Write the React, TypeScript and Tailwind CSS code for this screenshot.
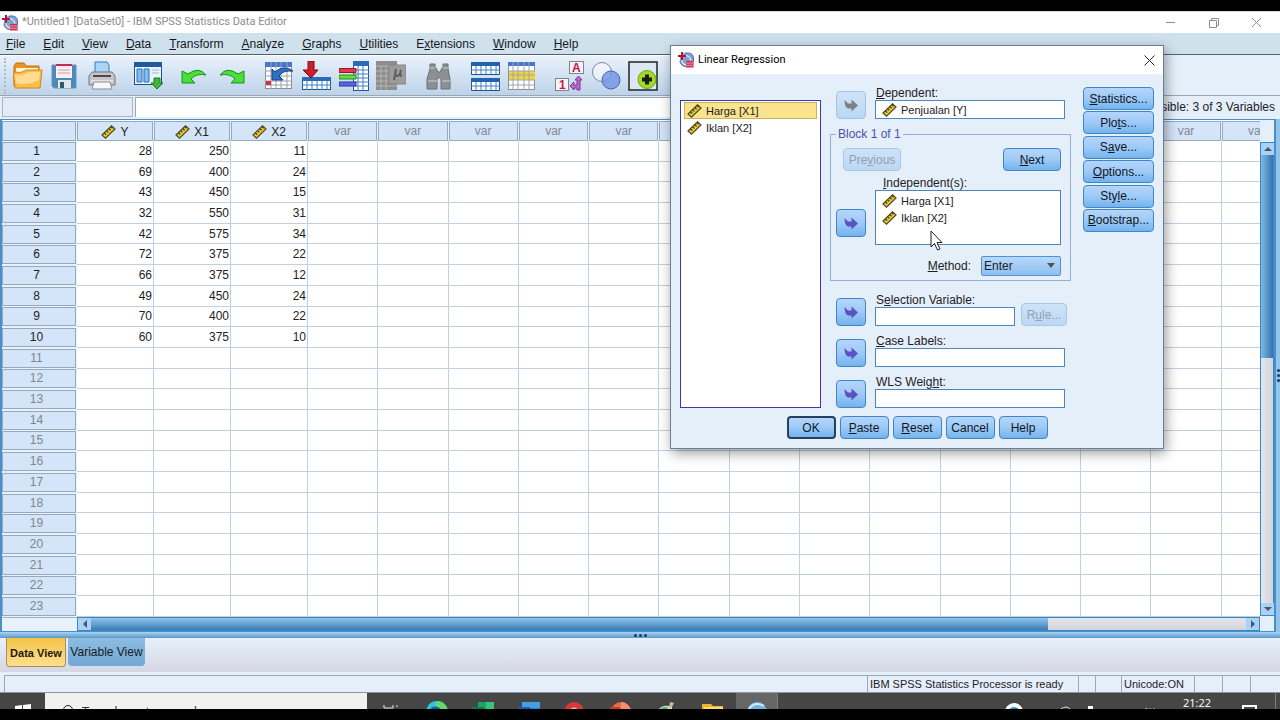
import React from 'react';

type Variable = { name: string; label?: string };

const variables: Variable[] = [
  { name: 'Y', label: 'Penjualan' },
  { name: 'X1', label: 'Harga' },
  { name: 'X2', label: 'Iklan' },
];

const cases = [
  [28, 250, 11],
  [69, 400, 24],
  [43, 450, 15],
  [32, 550, 31],
  [42, 575, 34],
  [72, 375, 22],
  [66, 375, 12],
  [49, 450, 24],
  [70, 400, 22],
  [60, 375, 10],
];

const ROW_COUNT = 23;
const EMPTY_COLUMNS = 14;

const menus = [
  '_File', '_Edit', '_View', '_Data', '_Transform', '_Analyze',
  '_Graphs', '_Utilities', 'E_xtensions', '_Window', '_Help',
];

// "_File" underlines the F
const Mnemonic = ({ text }: { text: string }) => {
  const at = text.indexOf('_');
  if (at < 0) return <>{text}</>;
  return (
    <span>
      {text.slice(0, at)}
      <span className="underline underline-offset-1">{text[at + 1]}</span>
      {text.slice(at + 2)}
    </span>
  );
};

const SpssIcon = ({ className = '' }: { className?: string }) => (
  <svg viewBox="0 0 16 16" className={`w-4 h-4 shrink-0 ${className}`}>
    <path d="M6 1h4.500a5 5 0 0 1 5 5v9H8a6 6 0 0 1-6-6V4z" fill="#7fa3d0" />
    <path d="M7 3.500a6 6 0 0 1 6 5M4 8a5 5 0 0 0 4 5" stroke="#dfeaf7" strokeWidth="1.300" fill="none" />
    <path d="M7 1h3.500a5 5 0 0 1 5 5v3M2 8.500a6 6 0 0 0 5.500 6" stroke="#4a6ea5" fill="none" />
    <path d="M3 0h2v3h3v2H5v3H3V5H0V3h3z" fill="#b5123c" />
    <rect x="8" y="9" width="7.500" height="6.500" fill="#cf2b57" />
    <path d="M8 11h7.500M8 13.300h7.500" stroke="#f3c6d3" strokeWidth="0.700" />
  </svg>
);

const RulerIcon = () => (
  <svg viewBox="0 0 15 14" className="w-[15px] h-[14px] shrink-0">
    <path d="M1 10 10.500 0.800 14 4 4.500 13.200z" fill="#e5cb3a" stroke="#4f4a23" strokeWidth="1.200" />
    <path d="M3.500 8l1.700 1.500M5.700 5.900l1.700 1.500M7.900 3.800l1.700 1.500M10 1.800l1.500 1.400" stroke="#3d391c" strokeWidth="1.200" />
  </svg>
);

const OpenIcon = () => (
  <svg viewBox="0 0 30 30">
    <path d="M1 5l2-3h8l2 3h13v20H1z" fill="#e8961f" stroke="#c26f0b" />
    <path d="M3 7h22v5H3z" fill="#fff3d0" />
    <path d="M0 11q8 2 14-2h15l-2 18H2z" fill="#fbbd4e" stroke="#d98214" />
    <path d="M2 14q8 1 13-3h12l-1 8q-12 6-23 3z" fill="#ffdc92" />
  </svg>
);

const SaveIcon = () => (
  <svg viewBox="0 0 30 30">
    <path d="M2 4h24v23H4l-2-2z" fill="#4f87b5" stroke="#5f97c3" />
    <rect x="6" y="3" width="16" height="14" fill="#f5f2f6" />
    <path d="M6 4h16" stroke="#c8284a" strokeWidth="2" />
    <path d="M8 9h12M8 12h12" stroke="#dd93a4" />
    <rect x="8" y="19" width="13" height="8" fill="#dfe5ea" />
    <rect x="10" y="21" width="4" height="6" fill="#34566f" />
  </svg>
);

const PrintIcon = () => (
  <svg viewBox="0 0 30 30">
    <path d="M8 1h12l2 3v9H8z" fill="#a9d3f7" stroke="#3d7bb5" />
    <path d="M5 11h20l3 4v9H2v-9z" fill="#c6c6c9" stroke="#77777c" />
    <path d="M6 14h18v2H6z" fill="#4a4a4f" />
    <path d="M4 20h22" stroke="#fff" />
    <path d="M7 21h16l2 7H5z" fill="#f7f7f7" stroke="#8d8d92" />
  </svg>
);

const RecallIcon = () => (
  <svg viewBox="0 0 30 30">
    <rect x="0.500" y="1.500" width="27" height="22" fill="#eaf3fc" stroke="#1d4f8d" />
    <path d="M0 1h28v5H0z" fill="#1f5a9e" />
    <path d="M3 8h5v13H3zM10 8h5v13h-5z" fill="#7fbbec" stroke="#2b73b8" />
    <path d="M18 9h7M18 12h7" stroke="#9fb9d4" />
    <path d="M20 17h6v5h3l-6 6-6-6h3z" fill="#3fb839" stroke="#1f7a20" />
  </svg>
);

const UndoIcon = () => (
  <svg viewBox="0 0 30 30">
    <path d="M1 10v12h13l-4-4q5-6 15-4-7-9-18-1z" fill="#49e03a" stroke="#1f8a1c" />
  </svg>
);

const RedoIcon = () => (
  <svg viewBox="0 0 30 30">
    <path d="M26 10v12H13l4-4q-5-6-15-4 7-9 18-1z" fill="#49e03a" stroke="#1f8a1c" />
  </svg>
);

const GotoCaseIcon = () => (
  <svg viewBox="0 0 30 30">
    <rect x="0.500" y="1.500" width="26" height="26" fill="#fff" stroke="#8b8f99" />
    <path d="M0 1h27v5H0z" fill="#4a74cf" />
    <path d="M0 10h27M0 15h27M0 20h27M0 24h27M6 1v27M11 1v27M16 1v27M22 1v27" stroke="#9aa0ab" />
    <rect x="1" y="20" width="5" height="4" fill="#dc2b3a" />
    <path d="M7 8v11h11l-4-4q4-6 14-5-9-7-18 1z" fill="#2f6fc4" stroke="#174583" />
  </svg>
);

const GotoVariableIcon = () => (
  <svg viewBox="0 0 30 30">
    <rect x="0.500" y="16.500" width="28" height="12" fill="#fff" stroke="#1d5598" />
    <path d="M0 16h29v4H0z" fill="#2a6cb5" />
    <path d="M0 24h29M5 20v9M10 20v9M15 20v9M20 20v9M25 20v9" stroke="#3d80c8" />
    <path d="M6 0h6v9h4l-7 8-8-8h5z" fill="#cc1f2b" stroke="#7c0c14" />
  </svg>
);

const VariablesIcon = () => (
  <svg viewBox="0 0 30 30">
    <rect x="14.500" y="0.500" width="15" height="29" fill="#fff" stroke="#1d5598" />
    <path d="M14 0h16v5H14z" fill="#2a6cb5" />
    <path d="M14 9h16M14 13h16M14 17h16M14 21h16M14 25h16M19 5v25M24 5v25" stroke="#3d80c8" />
    <path d="M0 7.500h17v4H0z" fill="#e2384b" stroke="#9c1525" />
    <path d="M0 14h17v4H0z" fill="#62dc43" stroke="#2c8c1d" />
    <path d="M0 21h17v4H0z" fill="#5768e6" stroke="#2a3599" />
  </svg>
);

const DescriptivesIcon = () => (
  <svg viewBox="0 0 30 30">
    <path d="M0 0h21v29H0z" fill="#8d8d8d" />
    <path d="M0 5h21M0 10h21M0 15h21M0 20h21M0 25h21M5 5v24M10 5v24" stroke="#b5b5b5" />
    <path d="M13 4h17v19H13z" fill="#9c9c9c" stroke="#858585" />
    <path d="M18 19l2-11M20 8q-2 7 1 7t4-6q-2 6 1 6" stroke="#5e5e5e" strokeWidth="2" fill="none" />
  </svg>
);

const FindIcon = () => (
  <svg viewBox="0 0 30 30">
    <path d="M7 3h5v4h1l2 4h2l2-4h1V3h5v5l2 10v10h-9V17h-4v11H4V18l3-10z" fill="#8d9093" stroke="#6d7073" />
    <path d="M5 20h9M19 20h8M7 7h5M20 7h5" stroke="#b9bcbf" strokeWidth="1.500" />
  </svg>
);

const SplitIcon = () => (
  <svg viewBox="0 0 30 30">
    <path d="M1.500 1.500h28v12h-28zM1.500 17.500h28v12h-28z" fill="#fff" stroke="#1d5598" />
    <path d="M1 1h29v4H1zM1 17h29v4H1z" fill="#2263ad" />
    <path d="M1 9h29M1 25h29M6 5v8M11 5v8M16 5v8M21 5v8M26 5v8M6 21v8M11 21v8M16 21v8M21 21v8M26 21v8" stroke="#3d80c8" />
  </svg>
);

const SelectCasesIcon = () => (
  <svg viewBox="0 0 30 30">
    <rect x="1.500" y="1.500" width="26" height="27" fill="#fff" stroke="#8b8f99" />
    <path d="M1 1h27v4H1z" fill="#4a74cf" />
    <path d="M2 10h26v9H2z" fill="#efd640" />
    <path d="M1 10h27M1 14h27M1 19h27M1 24h27M6 1v28M11 1v28M17 1v28M22 1v28" stroke="#a0a4ad" />
  </svg>
);

const ValueLabelsIcon = () => (
  <svg viewBox="0 0 30 30">
    <rect x="15.500" y="0.500" width="14" height="12" fill="#f4f4f6" stroke="#82828c" />
    <text x="18" y="11" className="text-[12px] font-bold" fill="#c4174e">A</text>
    <rect x="1.500" y="17.500" width="13" height="12" fill="#f4f4f6" stroke="#82828c" />
    <text x="5" y="28" className="text-[12px] font-bold" fill="#c4174e">1</text>
    <path d="M16 25l4-4v3h3v-5h-2l3.500-4 3.500 4h-2v10h-3v-2h-3v2z" fill="#b96acb" stroke="#7c3591" />
  </svg>
);

const SetsIcon = () => (
  <svg viewBox="0 0 30 30">
    <circle cx="11" cy="11" r="9.500" fill="#ffffff" fillOpacity="0.5" stroke="#7d8696" />
    <circle cx="20" cy="19" r="9" fill="#6f93e6" fillOpacity="0.8" stroke="#4a64a8" />
  </svg>
);

const ShowAllIcon = () => (
  <svg viewBox="0 0 30 30">
    <rect x="1" y="1" width="28" height="28" fill="#dbe7f3" stroke="#22242a" strokeWidth="1.500" />
    <circle cx="19" cy="18.500" r="9" fill="#a3d92a" stroke="#71a30f" />
    <path d="M17 13.500h4v3h3v4h-3v3h-4v-3h-3v-4h3z" fill="#17210a" />
  </svg>
);

const toolGroups: { label: string; icon: React.ReactNode }[][] = [
  [
    { label: 'Open data document', icon: <OpenIcon /> },
    { label: 'Save this document', icon: <SaveIcon /> },
    { label: 'Print', icon: <PrintIcon /> },
  ],
  [{ label: 'Recall recently used dialogs', icon: <RecallIcon /> }],
  [
    { label: 'Undo', icon: <UndoIcon /> },
    { label: 'Redo', icon: <RedoIcon /> },
  ],
  [
    { label: 'Go to case', icon: <GotoCaseIcon /> },
    { label: 'Go to variable', icon: <GotoVariableIcon /> },
    { label: 'Variables', icon: <VariablesIcon /> },
    { label: 'Run descriptive statistics', icon: <DescriptivesIcon /> },
  ],
  [{ label: 'Find', icon: <FindIcon /> }],
  [
    { label: 'Split file', icon: <SplitIcon /> },
    { label: 'Select cases', icon: <SelectCasesIcon /> },
  ],
  [
    { label: 'Value labels', icon: <ValueLabelsIcon /> },
    { label: 'Use variable sets', icon: <SetsIcon /> },
    { label: 'Show all variables', icon: <ShowAllIcon /> },
  ],
];

const TitleBar = () => (
  <header className="flex items-center h-[22px] shrink-0 bg-white pl-[2px] pr-[18px] border-t border-gray-300">
    <SpssIcon />
    <h1 className="ml-1 flex-1 text-[11px] text-[#8c8c8c] font-[Roboto,sans-serif]">
      *Untitled1 [DataSet0] - IBM SPSS Statistics Data Editor
    </h1>
    <div className="flex gap-8 text-[#8c8c8c]">
      <button aria-label="Minimize">
        <svg viewBox="0 0 11 11" className="w-[11px] h-[11px]"><path d="M1 5.500h9" stroke="currentColor" /></svg>
      </button>
      <button aria-label="Restore">
        <svg viewBox="0 0 11 11" className="w-[11px] h-[11px]"><path d="M1.500 3.500h7v7h-7zM3.500 3V1.500h7v7H9" stroke="currentColor" fill="none" /></svg>
      </button>
      <button aria-label="Close">
        <svg viewBox="0 0 11 11" className="w-[11px] h-[11px]"><path d="M1 1l9 9M10 1l-9 9" stroke="currentColor" /></svg>
      </button>
    </div>
  </header>
);

const MenuBar = () => (
  <nav className="flex items-center gap-[18px] h-[22px] shrink-0 pl-[6px] bg-[#d0e1ee] border-b border-[#55606b]">
    {menus.map((m) => (
      <button key={m} className="text-[12px] leading-4 text-[#15181c]">
        <Mnemonic text={m} />
      </button>
    ))}
  </nav>
);

const ToolGroup = ({ tools }: { tools: { label: string; icon: React.ReactNode }[] }) => (
  <div className="flex gap-[7px]">
    {tools.map((t) => (
      <button key={t.label} aria-label={t.label} className="w-[30px] h-[30px]">
        {t.icon}
      </button>
    ))}
  </div>
);

const Toolbar = () => (
  <div className="flex h-[41px] shrink-0 bg-[#e5effa] border-b border-[#9aa6b3]">
    <div className="flex items-center gap-[17px] pl-[4px] pr-8 bg-gradient-to-b from-[#e9f2fb] to-[#bdd3e9] border-t border-white">
      <div className="flex items-center gap-[6px]">
        <span className="w-[3px] h-9 border-l-2 border-dotted border-[#a9bccd]" />
        <ToolGroup tools={toolGroups[0]} />
      </div>
      {toolGroups.slice(1).map((tools, i) => (
        <ToolGroup key={i} tools={tools} />
      ))}
    </div>
  </div>
);

const CellEditor = () => (
  <div className="flex h-[23px] shrink-0 pt-px bg-[#e5effa]">
    <input aria-label="Cell" readOnly className="ml-[2px] w-[131px] h-[20px] border border-[#aab4c0] bg-[#e4ebf6] outline-none" />
    <input aria-label="Cell value" readOnly className="ml-[2px] flex-1 h-[20px] border-l border-t border-[#9aa6b3] bg-white outline-none" />
    <span className="pl-2 pr-[5px] text-[12px] leading-5 text-[#1d2126]">Visible: 3 of 3 Variables</span>
  </div>
);

const DataGrid = () => (
  <table className="table-fixed w-[1290px] h-full border-separate border-spacing-0 text-[12px] leading-4">
    <colgroup>
      <col className="w-[75px]" />
      <col className="w-[77px]" />
      <col className="w-[77px]" />
      <col className="w-[77px]" />
      {Array.from({ length: EMPTY_COLUMNS }, (_, i) => <col key={i} />)}
    </colgroup>
    <thead>
      <tr className="bg-[#e9f1fb]">
        <th className="p-0">
          <div className="h-[20px] mr-px border border-[#8fa5bd] bg-[#d4e4f9]" />
        </th>
        {variables.map((v) => (
          <th key={v.name} className="p-0 font-normal">
            <div className="flex items-center justify-center gap-[4px] h-[20px] mr-px pt-px border border-[#98a9bd] bg-[#d4e4f9] text-[#1d2126]">
              <RulerIcon />
              {v.name}
            </div>
          </th>
        ))}
        {Array.from({ length: EMPTY_COLUMNS }, (_, i) => (
          <th key={i} className="p-0 font-normal">
            <div className="h-[20px] mr-px pt-px border border-[#98a9bd] bg-[#d4e4f9] text-[#84898f]">var</div>
          </th>
        ))}
      </tr>
    </thead>
    <tbody>
      {Array.from({ length: ROW_COUNT }, (_, row) => (
        <tr key={row}>
          <th className="p-0 font-normal bg-[#e9f1fb]">
            <div
              className={`h-[19px] mr-px pr-[5px] border border-[#98a9bd] bg-[#d4e4f9] ${
                row < cases.length ? 'text-[#1d2126]' : 'text-[#7f858c]'
              }`}
            >
              {row + 1}
            </div>
          </th>
          {Array.from({ length: variables.length + EMPTY_COLUMNS }, (_, col) => (
            <td key={col} className="py-0 pl-0 pr-px text-right text-[#1d2126] border-r border-b border-[#c0cfe2]">
              {cases[row]?.[col]}
            </td>
          ))}
        </tr>
      ))}
    </tbody>
  </table>
);

const Arrow = ({ d, label }: { d: string; label: string }) => (
  <button aria-label={label} className="flex items-center justify-center w-[13px] h-[12px] shrink-0 bg-[#a9d2f8]">
    <svg viewBox="0 0 8 8" className="w-2 h-2"><path d={d} fill="#4b5563" /></svg>
  </button>
);

const Workspace = () => (
  <main className="flex flex-1 min-h-0 bg-[#e5effa]">
    <div className="flex flex-1 min-w-0 border-t border-x-2 border-b border-[#4a90c8]">
      <div className="flex flex-col flex-1 min-w-0">
        <div className="flex-1 min-h-0 pt-px overflow-hidden bg-white">
          <DataGrid />
        </div>
        <div className="flex h-[14px] shrink-0">
          <div className="w-[75px] border-t border-[#9db3c9] bg-[#e9f1fb]" />
          <div className="flex flex-1 border border-[#3a86c0] bg-gradient-to-b from-[#e4e5ea] to-[#d3d5de]">
            <Arrow d="M6 0v8L2 4z" label="Scroll left" />
            <div className="w-[81%] bg-gradient-to-b from-[#8fc4ea] to-[#3a7db6]" />
            <div className="flex-1" />
            <Arrow d="M2 0v8l4-4z" label="Scroll right" />
          </div>
        </div>
      </div>
      <div className="flex flex-col w-[14px] shrink-0 pt-[22px] pb-[15px]">
        <div className="flex flex-col flex-1 border border-[#3a86c0] bg-gradient-to-r from-[#e4e5ea] to-[#d3d5de]">
          <Arrow d="M0 6h8L4 2z" label="Scroll up" />
          <div className="h-[43%] bg-gradient-to-r from-[#7dbbe6] to-[#3474ad]" />
          <div className="flex-1" />
          <Arrow d="M0 2h8L4 6z" label="Scroll down" />
        </div>
      </div>
    </div>
    <div className="flex flex-col items-center justify-center gap-[2px] w-[4px] bg-[#93c4ec]">
      <i className="w-[3px] h-[3px] rounded-full bg-[#16395c]" />
      <i className="w-[3px] h-[3px] rounded-full bg-[#16395c]" />
      <i className="w-[3px] h-[3px] rounded-full bg-[#16395c]" />
    </div>
  </main>
);

const ViewTabs = () => (
  <>
    <div className="flex items-center justify-center gap-[2px] h-[6px] shrink-0 bg-gradient-to-b from-[#a9d5f5] to-[#5c96c8]">
      <i className="w-[3px] h-[3px] rounded-full bg-[#16395c]" />
      <i className="w-[3px] h-[3px] rounded-full bg-[#16395c]" />
      <i className="w-[3px] h-[3px] rounded-full bg-[#16395c]" />
    </div>
    <div role="tablist" className="flex items-start gap-[2px] h-[34px] shrink-0 pl-[6px] bg-gradient-to-b from-[#e8f1fb] to-[#d5d6e3]">
      <button role="tab" aria-selected="true" className="w-[60px] h-[29px] pt-[2px] rounded-b border border-t-0 border-[#a8905a] bg-gradient-to-b from-[#f4c445] to-[#fddf8d] text-[11px] font-bold text-[#1c1a12] whitespace-nowrap">
        Data View
      </button>
      <button role="tab" aria-selected="false" className="w-[77px] h-[28px] rounded-b bg-gradient-to-b from-[#8cbce2] to-[#72a8d3] text-[12px] text-[#141b22] whitespace-nowrap">
        Variable View
      </button>
    </div>
  </>
);

const StatusBar = () => (
  <footer className="flex h-[21px] shrink-0 pt-[3px] pl-1 bg-[#e5effa] text-[11px] leading-4 text-[#1d2126] border-b border-[#8d959d]">
    <div className="flex-1 border-l border-t border-[#9fa8b2]" />
    <div className="w-[211px] pl-[2px] whitespace-nowrap border-l border-t border-[#9fa8b2]">IBM SPSS Statistics Processor is ready</div>
    <div className="w-[17px] border-l border-t border-[#9fa8b2]" />
    <div className="w-[26px] border-l border-t border-[#9fa8b2]" />
    <div className="w-[73px] pl-[2px] border-l border-t border-[#9fa8b2]">Unicode:ON</div>
    <div className="w-[28px] border-l border-t border-[#9fa8b2]" />
    <div className="w-[28px] border-l border-t border-[#9fa8b2]" />
    <div className="w-[30px] border-l border-t border-[#9fa8b2]" />
  </footer>
);

const apps = [
  {
    label: 'Microsoft Edge',
    icon: (
      <svg viewBox="0 0 22 22">
        <circle cx="11" cy="11" r="11" fill="#2fc3d6" />
        <path d="M11 0a11 11 0 0 1 11 11h-8q0-5-5-6z" fill="#5edb6a" />
        <path d="M3 11q2-7 9-5 4 2 3 5z" fill="#175fae" />
      </svg>
    ),
  },
  {
    label: 'Excel',
    icon: (
      <svg viewBox="0 0 22 22">
        <path d="M6 1h8v20H6z" fill="#1fa362" />
        <path d="M14 1h8v20h-8z" fill="#37c481" />
        <path d="M0 6h12v11H0z" fill="#137a43" />
      </svg>
    ),
  },
  {
    label: 'Word',
    icon: (
      <svg viewBox="0 0 22 22">
        <path d="M4 1h18v20H4z" fill="#419fe8" />
        <path d="M4 7h18v14H4z" fill="#2b7bd3" />
        <path d="M0 6h12v11H0z" fill="#1b5cb8" />
      </svg>
    ),
  },
  {
    label: 'Chrome',
    icon: (
      <svg viewBox="0 0 22 22">
        <circle cx="10" cy="11" r="10" fill="#d9383a" />
        <circle cx="10" cy="11" r="4.500" fill="#e9b9b9" />
      </svg>
    ),
  },
  {
    label: 'PowerPoint',
    icon: (
      <svg viewBox="0 0 22 22">
        <circle cx="11" cy="11" r="10" fill="#ec6a4c" />
        <path d="M11 1a10 10 0 0 1 10 10H11z" fill="#ff8f6b" />
        <path d="M0 6h10v11H0z" fill="#c43e1c" />
      </svg>
    ),
  },
  {
    label: 'Paint',
    icon: (
      <svg viewBox="0 0 22 22">
        <path d="M1 10q6-8 15-4v8H1z" fill="#cfe6ee" />
        <path d="M4 8q4-3 8-2l-2 4z" fill="#6cb04a" />
        <path d="M14 1l4 1-2 4-3 2z" fill="#d8b988" />
      </svg>
    ),
  },
  {
    label: 'File Explorer',
    icon: (
      <svg viewBox="0 0 22 22">
        <path d="M0 3h9l2 2h10v15H0z" fill="#eeb52c" />
        <path d="M2 6h19v14H2z" fill="#fbdc78" />
      </svg>
    ),
  },
];

const Taskbar = () => (
  <div className="h-[16px] shrink-0 overflow-hidden bg-[#464646]">
    <div className="flex h-[38px] items-center font-['Open_Sans',sans-serif]">
      <button aria-label="Start" className="flex items-center justify-center w-[45px] h-full">
        <svg viewBox="0 0 16 16" className="w-4 h-4"><path d="M0 2l7-1v6.500H0zM8 1l8-1v7.500H8zM0 8.500h7V15l-7-1zM8 8.500h8V16l-8-1z" fill="#fff" /></svg>
      </button>
      <label className="flex items-center gap-[7px] w-[322px] h-full pl-4 bg-[#f1f1f1]">
        <svg viewBox="0 0 14 14" className="w-[14px] h-[14px]"><path d="M1 13l4-4" stroke="#222" /><circle cx="7" cy="5" r="4.500" stroke="#222" fill="none" /></svg>
        <input placeholder="Type here to search" className="flex-1 text-[13px] placeholder-[#333333] outline-none" />
      </label>
      <button aria-label="Task view" className="ml-4 mr-5">
        <svg viewBox="0 0 16 16" className="w-4 h-4"><path d="M1 1v3h9V1M1 15v-4h9v4M1 6h9v3H1zM14 1v2M14 5v10" stroke="#e8e8e8" fill="none" /></svg>
      </button>
      <div className="flex gap-6 pl-[7px]">
        {apps.map((a) => (
          <button key={a.label} aria-label={a.label} className="w-[22px] h-[22px]">{a.icon}</button>
        ))}
      </div>
      <button aria-label="SPSS" className="flex items-center justify-center w-[42px] h-full ml-3 bg-[#666666] border-r border-[#7d7d7d]">
        <svg viewBox="0 0 22 22" className="w-[22px] h-[22px]">
          <circle cx="11" cy="11" r="10" fill="#6fb2e4" />
          <path d="M3 8q6-8 15-3M6 11h10" stroke="#d5ebf9" strokeWidth="2" fill="none" />
        </svg>
      </button>
      <div className="flex items-center gap-9 ml-auto text-white">
        <svg viewBox="0 0 20 20" className="w-5 h-5"><circle cx="10" cy="10" r="9" fill="#fff" /><circle cx="10" cy="11" r="6" fill="#2c8fc4" /><path d="M6 9h8" stroke="#fff" strokeWidth="2" /></svg>
        <svg viewBox="0 0 12 12" className="w-3 h-3"><path d="M1 3q5-4 9 0M3 5q3-2 5 0" stroke="#ddd" fill="none" /></svg>
      </div>
      <svg viewBox="0 0 8 14" className="ml-[14px] w-2 h-[14px]"><path d="M2 1h5v3H2zM0 4h8v9H0z" fill="#fff" /></svg>
      <svg viewBox="0 0 30 14" className="ml-9 w-[30px] h-[14px]"><path d="M2 5h4M14 5l3-2v9M20 3q3 4 0 8M24 3q3 4 0 8" stroke="#bbb" fill="none" /></svg>
      <div className="flex flex-col items-center w-[58px] ml-[8px] text-[11px] leading-[18px] text-white">
        <span>21:22</span>
        <span>05/10</span>
      </div>
      <svg viewBox="0 0 15 15" className="ml-4 mr-[18px] w-[15px] h-[15px]"><path d="M1 1h13v10H8l-3 3v-3H1z" stroke="#fff" strokeWidth="2" fill="none" /></svg>
      <span className="mr-1 w-px h-full bg-[#7d7d7d]" />
    </div>
  </div>
);

const DialogButton = ({ text, className = '', disabled = false }: { text: string; className?: string; disabled?: boolean }) => (
  <button
    disabled={disabled}
    className={`rounded border text-[12px] leading-4 whitespace-nowrap ${
      disabled
        ? 'border-[#a5c9e8] bg-gradient-to-b from-[#cfe2f8] to-[#bbd8f3] text-[#93a0b0]'
        : 'border-[#3f86c9] bg-gradient-to-b from-[#b5d5fa] via-[#9dcaf7] to-[#74b3ec] text-[#10151c]'
    } ${className}`}
  >
    <Mnemonic text={text} />
  </button>
);

const MoveButton = ({ label, disabled = false }: { label: string; disabled?: boolean }) => (
  <button
    aria-label={label}
    disabled={disabled}
    className={`flex items-center justify-center w-[30px] h-[28px] shrink-0 rounded border ${
      disabled
        ? 'border-[#9cc5ea] bg-gradient-to-b from-[#cfe3f8] to-[#b9d8f3] text-[#7d7f83]'
        : 'border-[#3f86c9] bg-gradient-to-b from-[#b5d5fa] via-[#9dcaf7] to-[#74b3ec] text-[#5b52c4]'
    }`}
  >
    <svg viewBox="0 0 14 13" className="w-[14px] h-[13px]">
      <path d="M0.500 1 4 4.500h3.500V0.500L14 6.500 7.500 12.500V9.500H4Q0.500 8 0.500 1z" fill="currentColor" />
    </svg>
  </button>
);

const VariableItem = ({ v, selected = false }: { v: Variable; selected?: boolean }) => (
  <li
    role="option"
    aria-selected={selected}
    className={`flex items-center gap-1 h-[17px] pl-[2px] border ${
      selected ? 'border-[#c9b25c] bg-[#f9e38c]' : 'border-transparent'
    }`}
  >
    <RulerIcon />
    {v.label} [{v.name}]
  </li>
);

type FieldProps = { id: string; label: string; value?: string; className?: string };

const Field = ({ id, label, value = '', className = 'flex-1 min-w-0' }: FieldProps) => (
  <div className={className}>
    <label htmlFor={id} className="block h-[14px] pl-px text-[12px] leading-[14px] whitespace-nowrap">
      <Mnemonic text={label} />
    </label>
    <div className="flex items-center gap-1 h-[19px] border border-[#4a86bf] bg-white">
      {value && <span className="pl-[6px]"><RulerIcon /></span>}
      <input id={id} readOnly value={value} className="flex-1 min-w-0 outline-none" />
    </div>
  </div>
);

const RegressionDialog = () => {
  const [y, x1, x2] = variables;

  return (
    <div
      role="dialog"
      aria-label="Linear Regression"
      className="absolute left-[670px] top-[45px] w-[494px] border border-[#6b7f92] bg-[#e5effa] shadow-[2px_4px_12px_rgba(0,0,0,0.4)] text-[11px] leading-[14px] text-[#1d2126]"
    >
      <div className="flex items-center h-[28px] pl-[7px] pr-2 bg-white font-[Roboto,sans-serif]">
        <SpssIcon />
        <h2 className="ml-1 flex-1 text-[11px] text-black">Linear Regression</h2>
        <button aria-label="Close dialog">
          <svg viewBox="0 0 11 11" className="w-[11px] h-[11px]"><path d="M0.500 0.500l10 10M10.500 0.500l-10 10" stroke="#222" /></svg>
        </button>
      </div>

      <div className="flex px-[9px] pt-3">
        <ul role="listbox" aria-label="Variables" className="w-[141px] mt-[14px] mr-[9px] pt-px px-[3px] border border-[#3f36b0] bg-white">
          <VariableItem v={x1} selected />
          <VariableItem v={x2} />
        </ul>

        <div className="flex-1 min-w-0">
          <div className="flex items-end gap-[9px] px-[6px]">
            <MoveButton label="Move to dependent" disabled />
            <Field id="dependent" label="_Dependent:" value={`${y.label} [${y.name}]`} />
          </div>

          <fieldset className="mt-2 pl-[5px] pr-[9px] pb-1 border border-[#8fb3d6]">
            <legend className="ml-0 px-[2px] text-[12px] leading-[14px] text-[#4b4fa8]">Block 1 of 1</legend>
            <div className="flex justify-between pt-[7px] pl-[7px]">
              <DialogButton text="Pre_vious" disabled className="w-[58px] h-[23px]" />
              <DialogButton text="_Next" className="w-[58px] h-[23px]" />
            </div>
            <div className="mt-[5px] pl-[47px] text-[12px] leading-[14px]"><Mnemonic text="_Independent(s):" /></div>
            <div className="flex items-end gap-[9px]">
              <div className="pb-2"><MoveButton label="Move to independents" /></div>
              <ul role="listbox" aria-label="Independent(s)" className="flex-1 h-[55px] pt-px px-[3px] border border-[#4a86bf] bg-white">
                <VariableItem v={x1} />
                <VariableItem v={x2} />
              </ul>
            </div>
            <div className="flex items-center justify-end gap-[10px] mt-[11px]">
              <label htmlFor="method" className="text-[12px]"><Mnemonic text="_Method:" /></label>
              <div className="relative">
                <select id="method" className="block w-[80px] h-[20px] pl-[2px] appearance-none rounded-xs border border-[#4f93d2] bg-gradient-to-b from-[#b9d8fa] to-[#8cc0f0] text-[12px]">
                  <option>Enter</option>
                  <option>Stepwise</option>
                  <option>Remove</option>
                  <option>Backward</option>
                  <option>Forward</option>
                </select>
                <svg viewBox="0 0 8 5" className="absolute right-[6px] top-[7px] w-2 h-[5px]"><path d="M0 0h8L4 5z" fill="#4b5563" /></svg>
              </div>
            </div>
          </fieldset>

          <div className="flex items-end gap-[9px] mt-3 pl-[6px]">
            <MoveButton label="Move to selection variable" />
            <Field id="selection" label="S_election Variable:" className="w-[140px] shrink-0" />
            <DialogButton text="R_ule..." disabled className="w-[46px] h-[23px] -ml-[3px]" />
          </div>
          <div className="flex items-end gap-[9px] mt-2 px-[6px]">
            <MoveButton label="Move to case labels" />
            <Field id="caseLabels" label="_Case Labels:" />
          </div>
          <div className="flex items-end gap-[9px] mt-2 px-[6px]">
            <MoveButton label="Move to WLS weight" />
            <Field id="wls" label="WLS Weig_ht:" />
          </div>
        </div>

        <div className="flex flex-col justify-between w-[71px] h-[145px] ml-3 mt-px">
          {['_Statistics...', 'Plo_ts...', 'S_ave...', '_Options...', 'Sty_le...', '_Bootstrap...'].map((t) => (
            <DialogButton key={t} text={t} className="h-[23px]" />
          ))}
        </div>
      </div>

      <div className="flex justify-center gap-1 pt-2 pb-[9px]">
        <button className="w-[49px] h-[23px] rounded border-2 border-[#26405e] bg-gradient-to-b from-[#b5d5fa] via-[#9dcaf7] to-[#74b3ec] text-[12px] text-[#10151c]">OK</button>
        {['_Paste', '_Reset', 'Cancel', 'Help'].map((t) => (
          <DialogButton key={t} text={t} className="w-[49px] h-[23px]" />
        ))}
      </div>
    </div>
  );
};

// mouse pointer over the independents list
const Pointer = () => (
  <svg viewBox="0 0 13 21" className="absolute left-[930px] top-[230px] w-[13px] h-[21px]">
    <path d="M1 1v16l3.500-3.500L7.500 20l2.500-1-3-6.500h5z" fill="#fff" stroke="#222" />
  </svg>
);

const App: React.FC = () => {
  return (
    <div className="relative flex flex-col h-screen py-[11px] overflow-hidden bg-black font-['Liberation_Sans',Arial,sans-serif]">
      <TitleBar />
      <MenuBar />
      <Toolbar />
      <CellEditor />
      <Workspace />
      <ViewTabs />
      <StatusBar />
      <Taskbar />
      <RegressionDialog />
      <Pointer />
    </div>
  );
};

export default App;
